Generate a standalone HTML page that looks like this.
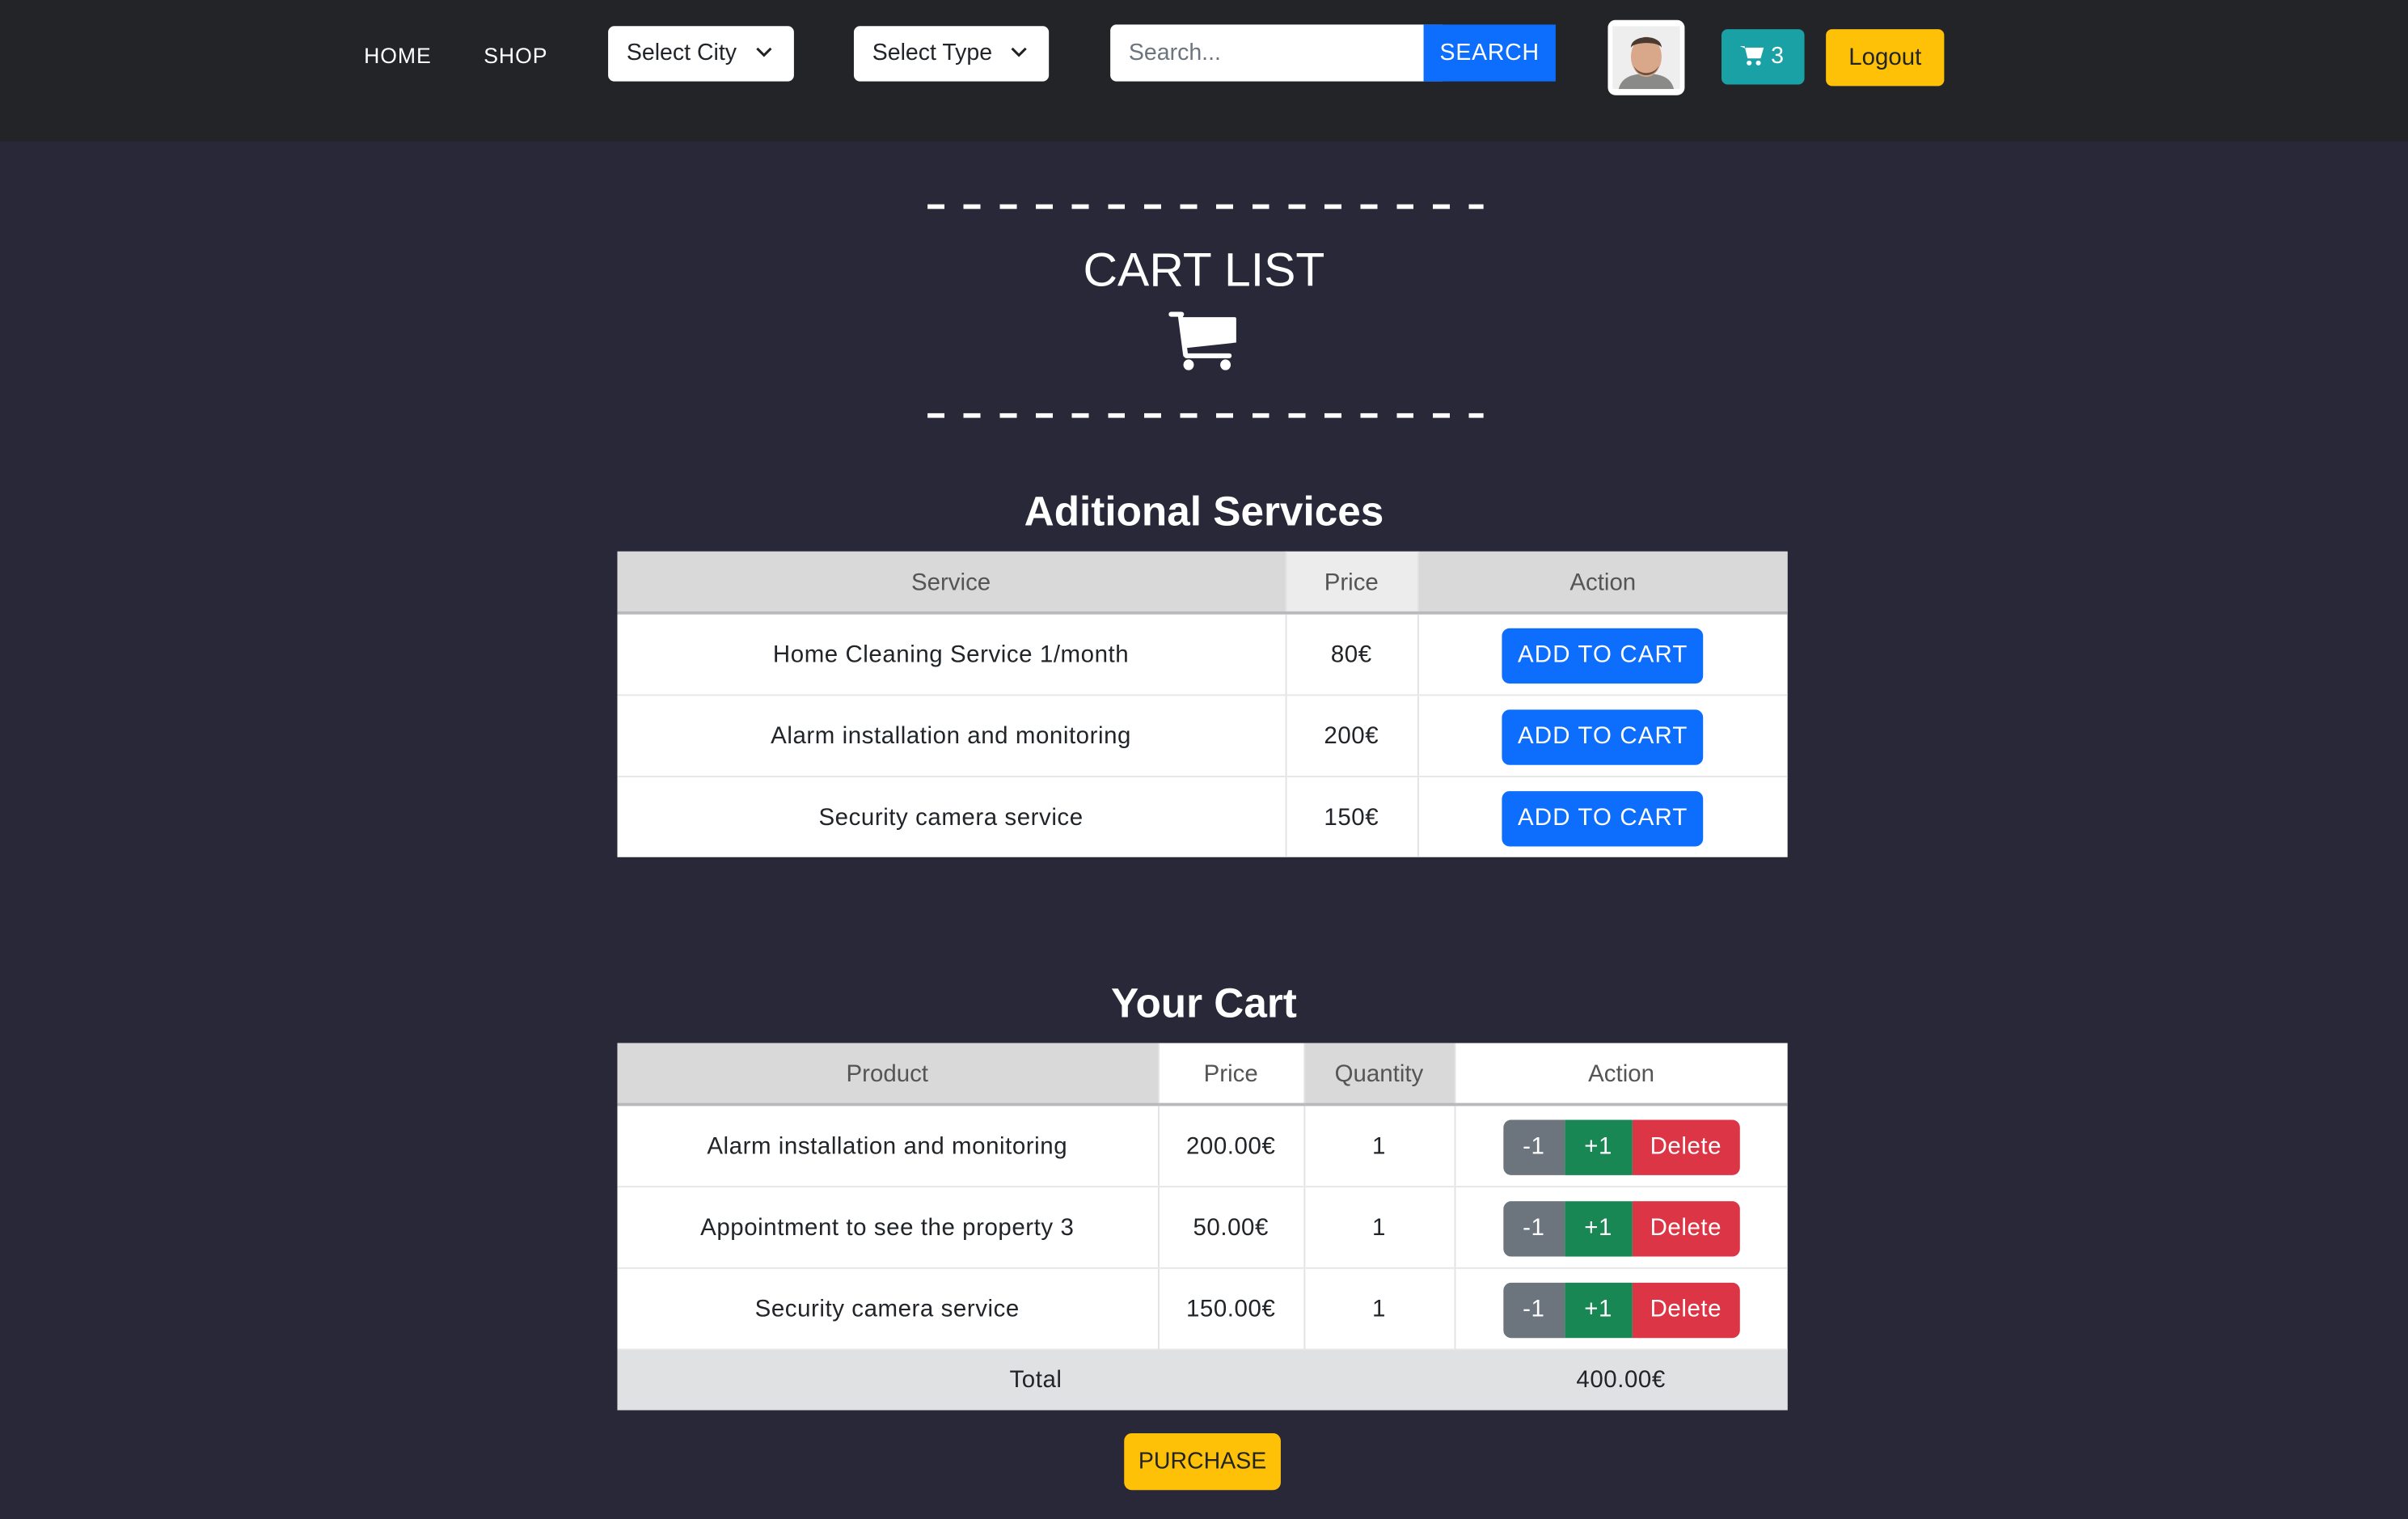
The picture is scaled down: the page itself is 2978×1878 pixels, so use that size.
<!DOCTYPE html>
<html><head><meta charset="utf-8">
<style>
*{box-sizing:border-box;margin:0;padding:0}
html,body{width:2978px;height:1878px;overflow:hidden;background:#292839}
#w{position:absolute;left:0;top:0;width:1568px;height:989px;transform:scale(1.8992);transform-origin:0 0;font-family:"Liberation Sans",sans-serif;color:#212529}
.a{position:absolute}
.nav{left:0;top:0;width:1568px;height:92px;background:#232428}
.nl{color:#fff;font-size:14px;letter-spacing:.5px;top:28px}
.sel{background:#fff;border-radius:4px;font-size:15px;padding-left:12px;line-height:36px;color:#212529}
.sel svg{position:absolute;right:14px;top:13px}
.dash{height:3px;background:repeating-linear-gradient(90deg,#fff 0 11px,transparent 11px 23.5px)}
table{position:absolute;border-collapse:collapse;background:#fff;font-size:15.5px;table-layout:fixed}
td,th{text-align:center;border-left:1px solid #e2e2e2;font-weight:normal}
th{color:#555;height:40px;border-bottom:2px solid #b8b9bd;padding-top:2px}
td{height:53px;border-bottom:1px solid #e6e6e6;color:#212529;letter-spacing:.3px;padding-top:2px}
.g{background:#d9d9d9}
.btn{display:inline-block;color:#fff;border-radius:5px;height:36px;line-height:36px;font-size:15.5px;vertical-align:middle}
.add{background:#0d6efd;width:131px;letter-spacing:.6px}
h2{position:absolute;width:1568px;text-align:center;color:#fff;font-size:27px;font-weight:bold}
</style></head><body><div id="w">
<div class="a nav"></div>
<div class="a nl" style="left:237px">HOME</div>
<div class="a nl" style="left:315px">SHOP</div>
<div class="a sel" style="left:396px;top:17px;width:121px;height:36px">Select City<svg width="11" height="8" viewBox="0 0 11 8"><path d="M1 1.5l4.5 4.5 4.5-4.5" stroke="#222" stroke-width="1.6" fill="none"/></svg></div>
<div class="a sel" style="left:556px;top:17px;width:127px;height:36px">Select Type<svg width="11" height="8" viewBox="0 0 11 8"><path d="M1 1.5l4.5 4.5 4.5-4.5" stroke="#222" stroke-width="1.6" fill="none"/></svg></div>
<div class="a sel" style="left:723px;top:16px;width:220px;height:37px;color:#6c757d;line-height:37px">Search...</div>
<div class="a" style="left:927px;top:16px;width:86px;height:37px;background:#0d6efd;color:#fff;font-size:15px;line-height:37px;text-align:center;letter-spacing:.4px">SEARCH</div>
<div class="a" style="left:1047px;top:13px;width:50px;height:49px;background:#fff;border-radius:5px;padding:4px 3px">
<svg width="44" height="41" viewBox="0 0 44 41"><rect width="44" height="41" fill="#eee"/><path d="M4 41c2-8 9-10 18-10s16 2 18 10z" fill="#8a8a88"/><ellipse cx="22" cy="20" rx="10" ry="13" fill="#d9a88a"/><path d="M12 14c0-9 20-9 20 0-2-4-18-4-20 0z" fill="#4a3a30"/><path d="M14 26c3 6 13 6 16 0-2 8-14 8-16 0z" fill="#6b5040"/></svg></div>
<div class="a" style="left:1121px;top:19px;width:54px;height:36px;background:#1aa1a5;border-radius:4px;color:#fff;font-size:15px;line-height:36px;padding-left:12px">
<svg width="16" height="14" viewBox="0 0 16 14" style="vertical-align:-2px"><path d="M0 1h3l2 8h8l2-6H4.5" fill="#fff"/><path d="M3.5 2H15.5L13.5 9H5z" fill="#fff"/><circle cx="6" cy="12" r="1.6" fill="#fff"/><circle cx="12" cy="12" r="1.6" fill="#fff"/></svg> 3</div>
<div class="a" style="left:1189px;top:19px;width:77px;height:37px;background:#ffc107;border-radius:4px;font-size:15.5px;line-height:37px;text-align:center">Logout</div>

<div class="a dash" style="left:604px;top:133px;width:362px"></div>
<div class="a" style="left:0;top:158px;width:1568px;text-align:center;color:#fff;font-size:31px">CART LIST</div>
<svg class="a" style="left:761px;top:203px" width="46" height="38" viewBox="0 0 46 38"><rect x="0" y="0" width="10" height="3.2" rx="1.6" fill="#fff"/><path d="M7.5 1.5L11 28" stroke="#fff" stroke-width="3.2" stroke-linecap="round"/><path d="M8 3.5H43a1 1 0 0 1 1 1V20L12 23.5z" fill="#fff"/><rect x="10" y="27" width="31" height="3.2" rx="1.5" fill="#fff"/><ellipse cx="13" cy="34.5" rx="3.4" ry="3.5" fill="#fff"/><ellipse cx="37" cy="34.5" rx="3.4" ry="3.5" fill="#fff"/></svg>
<div class="a dash" style="left:604px;top:269px;width:362px"></div>

<h2 style="top:318px">Aditional Services</h2>
<table style="left:402px;top:359px;width:762px">
<colgroup><col style="width:435px"><col style="width:86px"><col style="width:241px"></colgroup>
<tr><th class="g" style="border-left:0">Service</th><th style="background:#ececec">Price</th><th class="g">Action</th></tr>
<tr><td style="border-left:0">Home Cleaning Service 1/month</td><td>80€</td><td><span class="btn add">ADD TO CART</span></td></tr>
<tr><td style="border-left:0">Alarm installation and monitoring</td><td>200€</td><td><span class="btn add">ADD TO CART</span></td></tr>
<tr><td style="border-left:0;border-bottom:0">Security camera service</td><td style="border-bottom:0">150€</td><td style="border-bottom:0"><span class="btn add">ADD TO CART</span></td></tr>
</table>

<h2 style="top:638px">Your Cart</h2>
<table style="left:402px;top:679px;width:762px">
<colgroup><col style="width:352px"><col style="width:95px"><col style="width:98px"><col style="width:217px"></colgroup>
<tr><th class="g" style="border-left:0">Product</th><th>Price</th><th class="g">Quantity</th><th>Action</th></tr>
<tr><td style="border-left:0">Alarm installation and monitoring</td><td>200.00€</td><td>1</td><td><span class="btn" style="background:#6c757d;width:40px;border-radius:5px 0 0 5px">-1</span><span class="btn" style="background:#198754;width:44px;border-radius:0">+1</span><span class="btn" style="background:#dc3545;width:70px;border-radius:0 5px 5px 0">Delete</span></td></tr>
<tr><td style="border-left:0">Appointment to see the property 3</td><td>50.00€</td><td>1</td><td><span class="btn" style="background:#6c757d;width:40px;border-radius:5px 0 0 5px">-1</span><span class="btn" style="background:#198754;width:44px;border-radius:0">+1</span><span class="btn" style="background:#dc3545;width:70px;border-radius:0 5px 5px 0">Delete</span></td></tr>
<tr><td style="border-left:0">Security camera service</td><td>150.00€</td><td>1</td><td><span class="btn" style="background:#6c757d;width:40px;border-radius:5px 0 0 5px">-1</span><span class="btn" style="background:#198754;width:44px;border-radius:0">+1</span><span class="btn" style="background:#dc3545;width:70px;border-radius:0 5px 5px 0">Delete</span></td></tr>
<tr style="background:#e0e1e3"><td colspan="3" style="border:0;height:40px">Total</td><td style="border:0;height:40px">400.00€</td></tr>
</table>
<div class="a" style="left:732px;top:933px;width:102px;height:37px;background:#ffc107;border-radius:5px;text-align:center;line-height:37px;font-size:15px">PURCHASE</div>
</div></body></html>
